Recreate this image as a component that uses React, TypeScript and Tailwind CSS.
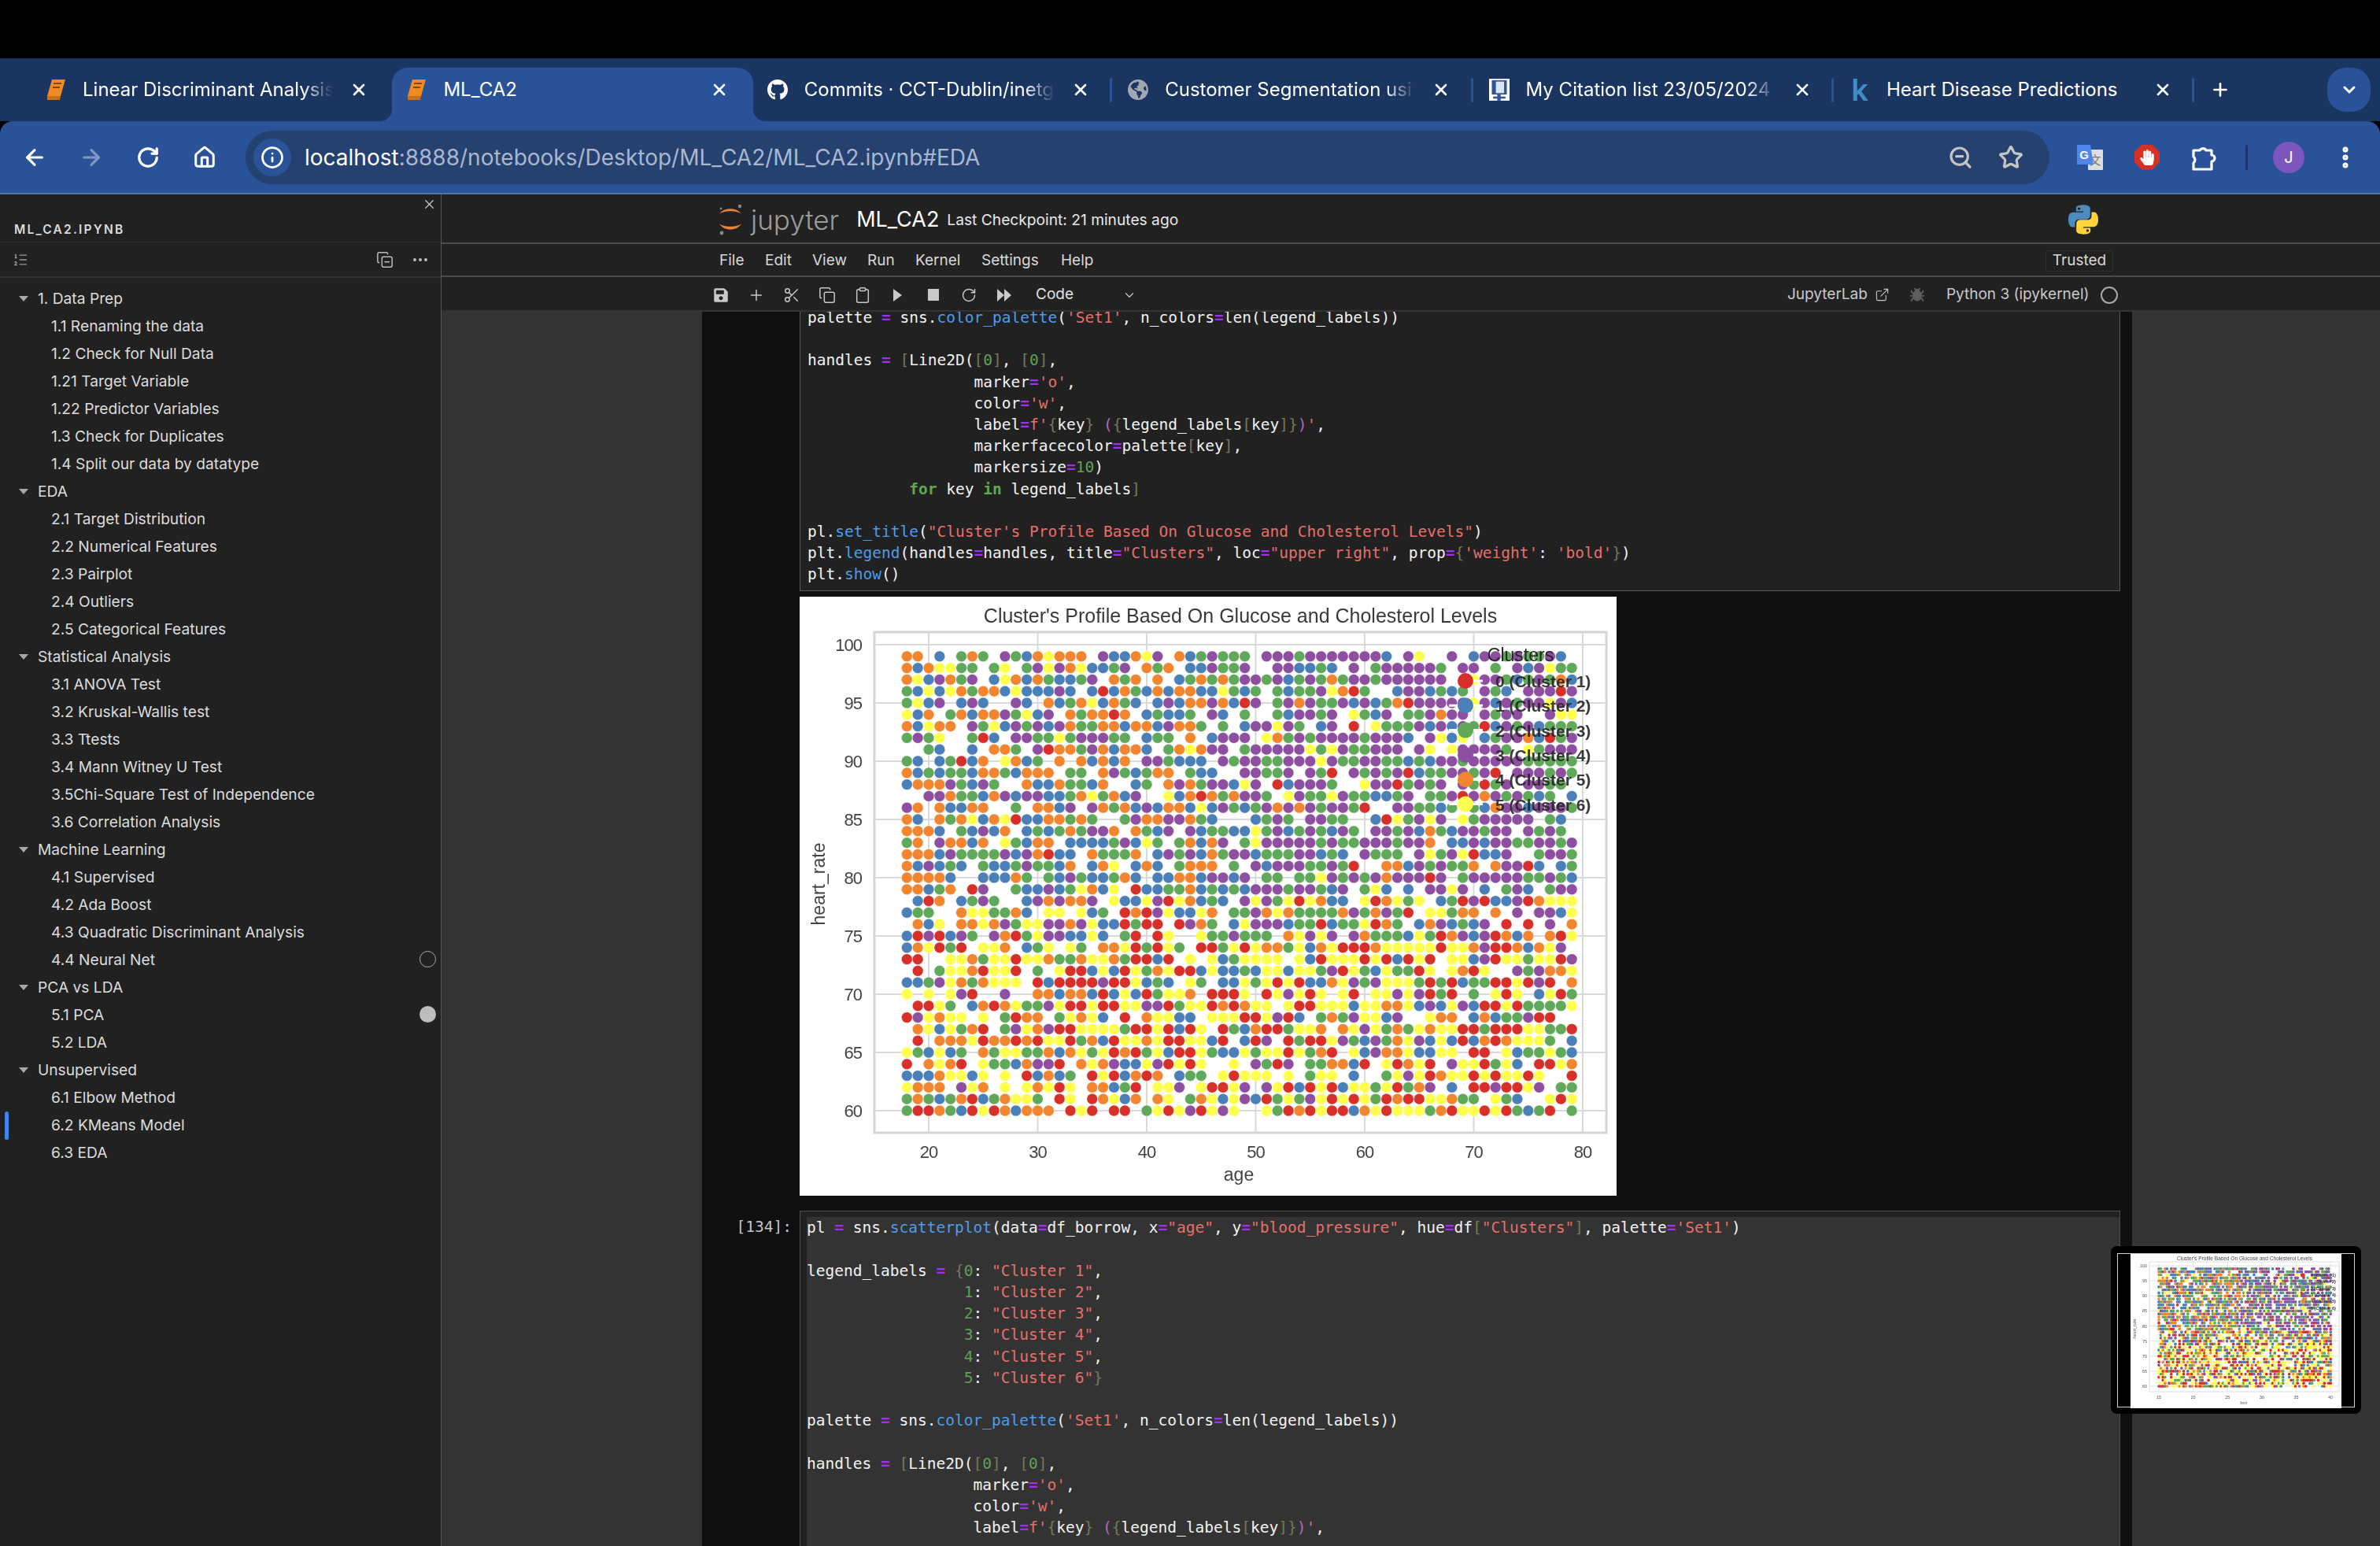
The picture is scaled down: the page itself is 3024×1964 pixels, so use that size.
import React from "react";
import {
  ArrowLeft, ArrowRight, RotateCw, House, Info, ZoomOut, Star, EllipsisVertical, X, Plus, ChevronDown,
  Scissors, Copy, Clipboard, ExternalLink, Bug, ListOrdered, Ellipsis, CopyMinus,
} from "lucide-react";
import { FaGithub, FaGlobeAmericas, FaSave, FaHandPaper } from "react-icons/fa";

const COLORS = ["#d7302a", "#4a7fb8", "#61a95a", "#8f4fa0", "#f28530", "#ffff4d"];

function rng(seed: number) {
  return () => {
    seed |= 0; seed = (seed + 0x6d2b79f5) | 0;
    let t = Math.imul(seed ^ (seed >>> 15), 1 | seed);
    t = (t + Math.imul(t ^ (t >>> 7), 61 | t)) ^ t;
    return ((t ^ (t >>> 14)) >>> 0) / 4294967296;
  };
}

function pick(hr: number, a: number, r: () => number) {
  // a runs from 0 (left of the axis) to 1 (right of the axis)
  const high = hr >= 79, mid = hr >= 75 && hr < 79;
  const w = high
    ? [0.03, a < 0.5 ? 0.3 : 0.13, 0.24, a > 0.45 ? 0.45 : 0.12, a < 0.5 ? 0.3 : 0.03, 0.06]
    : mid
    ? [0.14, 0.15, 0.2, 0.14, 0.17, 0.2]
    : [0.24, 0.1, 0.13, 0.06, a < 0.3 ? 0.18 : 0.09, 0.3];
  const total = w.reduce((s, v) => s + v, 0);
  let v = r() * total;
  for (let i = 0; i < 6; i++) { v -= w[i]; if (v <= 0) return i; }
  return 5;
}

function makeDots(cols: number, seed: number, gapChance: number) {
  const r = rng(seed);
  const out: { c: number; hr: number; k: number }[] = [];
  for (let hr = 99; hr >= 60; hr--) {
    for (let c = 0; c < cols; c++) {
      if (r() < gapChance) continue;
      out.push({ c, hr, k: pick(hr, c / cols, r) });
    }
  }
  return out;
}

const MAIN_DOTS = makeDots(62, 134, 0.13);
const MINI_DOTS = makeDots(84, 77, 0.28);

function MainChart() {
  const xs = [20, 30, 40, 50, 60, 70, 80];
  const ys = [100, 95, 90, 85, 80, 75, 70, 65, 60];
  const X = (a: number) => 1180 + (a - 20) * 13.85;
  const Y = (h: number) => 820 + (100 - h) * 14.8;
  const legend = ["0 (Cluster 1)", "1 (Cluster 2)", "2 (Cluster 3)", "3 (Cluster 4)", "4 (Cluster 5)", "5 (Cluster 6)"];
  const ff = "'Liberation Sans', sans-serif";
  return (
    <svg width={1038} height={761} viewBox="1016 759 1038 761" className="block bg-white blur-[0.4px]">
      <rect x={1111} y={804} width={930} height={636} fill="#fff" stroke="#d4d4d4" strokeWidth={3} />
      {xs.map((v) => <line key={v} x1={X(v)} x2={X(v)} y1={804} y2={1440} stroke="#d9d9d9" strokeWidth={2} />)}
      {ys.map((v) => <line key={v} x1={1111} x2={2041} y1={Y(v)} y2={Y(v)} stroke="#d9d9d9" strokeWidth={2} />)}
      {MAIN_DOTS.map((d, i) => (
        <circle key={i} cx={X(18 + d.c)} cy={Y(d.hr)} r={6.9} fill={COLORS[d.k]} stroke="#fff" strokeWidth={0.4} />
      ))}
      <text x={1576} y={792} textAnchor="middle" fontFamily={ff} fontSize={25} fill="#3a3a3a">Cluster's Profile Based On Glucose and Cholesterol Levels</text>
      {ys.map((v) => <text key={v} x={1095} y={Y(v) + 8} textAnchor="end" fontFamily={ff} fontSize={22} letterSpacing={-1} fill="#444">{v}</text>)}
      {xs.map((v) => <text key={v} x={X(v)} y={1472} textAnchor="middle" fontFamily={ff} fontSize={22} letterSpacing={-1} fill="#444">{v}</text>)}
      <text x={1574} y={1501} textAnchor="middle" fontFamily={ff} fontSize={23} fill="#444">age</text>
      <text transform="translate(1048 1124) rotate(-90)" textAnchor="middle" fontFamily={ff} fontSize={23} fill="#444">heart_rate</text>
      <text x={1932} y={841} textAnchor="middle" fontFamily={ff} fontSize={23} fill="#262626">Clusters</text>
      {legend.map((t, i) => {
        const y = 866 + i * 31.3;
        return (
          <g key={t}>
            <line x1={1841} x2={1884} y1={y} y2={y} stroke="#fff" strokeWidth={3} />
            <circle cx={1862} cy={y} r={10} fill={COLORS[i]} />
            <text x={1900} y={y + 8} fontFamily={ff} fontSize={21} fontWeight={700} fill="#262626" opacity={0.9}>{t}</text>
          </g>
        );
      })}
    </svg>
  );
}

function MiniChart() {
  const ff = "'Liberation Sans', sans-serif";
  const xt = [15, 20, 25, 30, 35, 40];
  const yt = [100, 95, 90, 85, 80, 75, 70, 65, 60];
  const X = (b: number) => 2743 + (b - 15) * 8.72;
  const Y = (h: number) => 1607 + (100 - h) * 3.825;
  return (
    <svg width={268} height={196} viewBox="2707 1592 268 196" className="block bg-white blur-[0.45px]">
      <rect x={2731} y={1602} width={241} height={165} fill="#fff" stroke="#ddd" strokeWidth={1} />
      {xt.map((v) => <line key={v} x1={X(v)} x2={X(v)} y1={1602} y2={1767} stroke="#e2e2e2" strokeWidth={1} />)}
      {yt.map((v) => <line key={v} x1={2731} x2={2972} y1={Y(v)} y2={Y(v)} stroke="#e2e2e2" strokeWidth={1} />)}
      {MINI_DOTS.map((d, i) => (
        <circle key={i} cx={2743 + d.c * 2.63} cy={Y(d.hr)} r={1.85} fill={COLORS[d.k]} />
      ))}
      <text x={2852} y={1600} textAnchor="middle" fontFamily={ff} fontSize={6.6} fill="#444">Cluster's Profile Based On Glucose and Cholesterol Levels</text>
      {yt.map((v) => <text key={v} x={2728} y={Y(v) + 2} textAnchor="end" fontFamily={ff} fontSize={5.5} fill="#555">{v}</text>)}
      {xt.map((v) => <text key={v} x={X(v)} y={1776} textAnchor="middle" fontFamily={ff} fontSize={5.5} fill="#555">{v}</text>)}
      <text x={2851} y={1783} textAnchor="middle" fontFamily={ff} fontSize={5.5} fill="#555">bmi</text>
      <text transform="translate(2714 1687) rotate(-90)" textAnchor="middle" fontFamily={ff} fontSize={5.5} fill="#555">heart_rate</text>
      {COLORS.map((c, i) => (
        <g key={c}>
          <circle cx={2926} cy={1619 + i * 8.3} r={2.8} fill={c} />
          <text x={2936} y={1621 + i * 8.3} fontFamily={ff} fontSize={5.5} fontWeight={700} fill="#333">{`${i} (Cluster ${i + 1})`}</text>
        </g>
      ))}
    </svg>
  );
}

function BookIcon() {
  return (
    <svg width={26} height={26} viewBox="0 0 26 26">
      <polygon points="8,0 25,0 19,21 2,21" fill="#f08a24" />
      <polygon points="2,21 19,21 18,26 2,26" fill="#c96f18" />
      <rect x={10} y={4} width={10} height={2} fill="#7a4a12" />
      <rect x={9} y={9} width={9} height={2} fill="#7a4a12" />
    </svg>
  );
}

function CitationIcon() {
  return (
    <svg width={30} height={32} viewBox="0 0 30 32">
      <rect width={30} height={32} fill="#fff" />
      <rect x={4} y={2} width={22} height={21} fill="#2f5597" />
      <rect x={10} y={4} width={12} height={17} fill="#dbe4f3" />
      <rect x={6} y={26} width={18} height={3} fill="#2f5597" />
      <rect x={12} y={23} width={5} height={9} fill="#2f5597" />
    </svg>
  );
}

function PuzzleIcon() {
  return (
    <svg width={34} height={36} viewBox="0 0 34 36" fill="none" stroke="#fff" strokeWidth={3.2} strokeLinejoin="round">
      <path d="M4 9 H12 A4.5 4.5 0 0 1 20 9 H27 V15 A4 4 0 0 1 27 23 V33 H4 V25 A5 5 0 0 0 4 17 Z" />
    </svg>
  );
}

function TabTitle({ text, fade }: { text: string; fade: boolean }) {
  return (
    <span
      className={
        fade
          ? "w-[318px] overflow-hidden whitespace-nowrap text-[24px] text-white [mask-image:linear-gradient(to_right,black_88%,transparent)]"
          : "w-[318px] overflow-hidden whitespace-nowrap text-[24px] text-white"
      }
    >
      {text}
    </span>
  );
}

const TABS: { title: string; icon: React.ReactNode; fade: boolean; sep: boolean }[] = [
  { title: "Linear Discriminant Analysis", icon: <BookIcon />, fade: true, sep: false },
  { title: "ML_CA2", icon: <BookIcon />, fade: false, sep: false },
  { title: "Commits · CCT-Dublin/inetg", icon: <FaGithub size={34} color="#fff" />, fade: true, sep: false },
  { title: "Customer Segmentation usi", icon: <FaGlobeAmericas size={28} color="#a2a8b2" />, fade: true, sep: true },
  { title: "My Citation list 23/05/2024", icon: <CitationIcon />, fade: true, sep: true },
  { title: "Heart Disease Predictions", icon: <span className="text-[38px] leading-none font-semibold text-[#3d8fc4]">k</span>, fade: false, sep: true },
];

function TabStrip() {
  return (
    <div className="flex h-[80px] bg-[#1a3560] pl-[40px]">
      {TABS.map((t, i) => (
        <div
          key={t.title}
          className={
            i === 1
              ? "relative mt-[12px] flex h-[68px] w-[458.4px] shrink-0 items-center rounded-t-[20px] bg-[#2a5298] pb-[12px] pl-[18px]"
              : "relative mt-[12px] flex h-[68px] w-[458.4px] shrink-0 items-center pb-[12px] pl-[18px]"
          }
        >
          {i === 1 && (
            <>
              <div className="absolute bottom-0 left-[-16px] h-[16px] w-[16px] bg-[radial-gradient(circle_at_0_0,transparent_16px,#2a5298_16.5px)]" />
              <div className="absolute right-[-16px] bottom-0 h-[16px] w-[16px] bg-[radial-gradient(circle_at_100%_0,transparent_16px,#2a5298_16.5px)]" />
            </>
          )}
          {t.sep && <div className="absolute top-[13px] left-[-5px] h-[31px] w-[3px] rounded-full bg-[#2a5298]" />}
          <div className="flex w-[26px] shrink-0 items-center justify-center">{t.icon}</div>
          <div className="ml-[21px] flex">
            <TabTitle text={t.title} fade={t.fade} />
          </div>
          <X className="ml-[21px] shrink-0 text-white" size={24} strokeWidth={2.6} />
        </div>
      ))}
      <div className="relative mt-[12px] flex h-[68px] items-center pb-[12px] pl-[18px]">
        <div className="absolute top-[13px] left-[-5px] h-[31px] w-[3px] rounded-full bg-[#2a5298]" />
        <Plus className="text-white" size={26} strokeWidth={2.4} />
      </div>
      <div className="mt-[12px] mr-[12px] ml-auto flex h-[56px] w-[55px] items-center justify-center rounded-[24px] bg-[#2a5298]">
        <ChevronDown className="text-white" size={24} strokeWidth={3} />
      </div>
    </div>
  );
}

function TBtn({ children, w = "w-[72px]" }: { children: React.ReactNode; w?: string }) {
  return <div className={`flex ${w} shrink-0 items-center justify-center`}>{children}</div>;
}

function TranslateIcon() {
  return (
    <svg width={34} height={32} viewBox="0 0 34 32">
      <rect x={14} y={6} width={19} height={26} rx={1} fill="#dedede" />
      <text x={23} y={25} textAnchor="middle" fontSize={15} fontFamily="'Noto Sans CJK SC', sans-serif" fill="#777">文</text>
      <polygon points="0,0 17,0 21,25 4,25 0,25" fill="#4f86ec" />
      <text x={9} y={18} textAnchor="middle" fontSize={15} fontWeight={700} fontFamily="'Liberation Sans', sans-serif" fill="#fff">G</text>
    </svg>
  );
}

function AddressBar() {
  return (
    <div className="flex h-[93px] items-center rounded-t-[16px] border-b-2 border-[#4f74aa] bg-[#2a5298] pl-[8px]">
      <TBtn><ArrowLeft className="text-white" size={32} strokeWidth={2.4} /></TBtn>
      <TBtn><ArrowRight className="text-[#7f97c2]" size={32} strokeWidth={2.4} /></TBtn>
      <TBtn><RotateCw className="text-white" size={30} strokeWidth={2.6} /></TBtn>
      <TBtn><House className="text-white" size={30} strokeWidth={2.4} /></TBtn>
      <div className="ml-[16px] flex h-[68px] w-[2292px] shrink-0 items-center rounded-full bg-[#24416f] pl-[10px]">
        <div className="flex h-[48px] w-[48px] items-center justify-center rounded-full bg-[#2a5298]">
          <Info className="text-white" size={30} strokeWidth={2.2} />
        </div>
        <div className="ml-[17px] text-[28px] whitespace-nowrap text-[#a9b7cf]">
          <span className="text-white">localhost</span>:8888/notebooks/Desktop/ML_CA2/ML_CA2.ipynb#EDA
        </div>
        <div className="mr-[17px] ml-auto flex">
          <TBtn w="w-[64px]"><ZoomOut className="text-[#c4c4c4]" size={32} strokeWidth={2.4} /></TBtn>
          <TBtn w="w-[64px]"><Star className="text-[#c4c4c4]" size={32} strokeWidth={2.4} /></TBtn>
        </div>
      </div>
      <div className="ml-[16px] flex">
        <TBtn><TranslateIcon /></TBtn>
        <TBtn>
          <div className="relative flex h-[32px] w-[32px] items-center justify-center bg-[#d93025] [clip-path:polygon(30%_0,70%_0,100%_30%,100%_70%,70%_100%,30%_100%,0_70%,0_30%)]">
            <FaHandPaper size={20} color="#fff" />
          </div>
        </TBtn>
        <TBtn><PuzzleIcon /></TBtn>
        <div className="flex w-[36px] shrink-0 items-center justify-center">
          <div className="h-[32px] w-[3px] rounded-full bg-[#1a3560]" />
        </div>
        <TBtn>
          <div className="flex h-[40px] w-[40px] items-center justify-center rounded-full bg-[#7a56bd] text-[20px] text-white">J</div>
        </TBtn>
        <TBtn><EllipsisVertical className="text-white" size={34} strokeWidth={3} /></TBtn>
      </div>
    </div>
  );
}

const TOC: [number, string][] = [
  [1, "1. Data Prep"], [2, "1.1 Renaming the data"], [2, "1.2 Check for Null Data"], [2, "1.21 Target Variable"],
  [2, "1.22 Predictor Variables"], [2, "1.3 Check for Duplicates"], [2, "1.4 Split our data by datatype"],
  [1, "EDA"], [2, "2.1 Target Distribution"], [2, "2.2 Numerical Features"], [2, "2.3 Pairplot"], [2, "2.4 Outliers"], [2, "2.5 Categorical Features"],
  [1, "Statistical Analysis"], [2, "3.1 ANOVA Test"], [2, "3.2 Kruskal-Wallis test"], [2, "3.3 Ttests"], [2, "3.4 Mann Witney U Test"], [2, "3.5Chi-Square Test of Independence"], [2, "3.6 Correlation Analysis"],
  [1, "Machine Learning"], [2, "4.1 Supervised"], [2, "4.2 Ada Boost"], [2, "4.3 Quadratic Discriminant Analysis"], [2, "4.4 Neural Net"],
  [1, "PCA vs LDA"], [2, "5.1 PCA"], [2, "5.2 LDA"],
  [1, "Unsupervised"], [2, "6.1 Elbow Method"], [2, "6.2 KMeans Model"], [2, "6.3 EDA"],
];

function Sidebar() {
  return (
    <div className="flex w-[561px] shrink-0 flex-col border-r border-[#555] bg-[#212121]">
      <div className="flex h-[61px] flex-col justify-between border-b border-[#2b2b2b] pb-[5px]">
        <div className="flex justify-end pt-[3px] pr-[5px]">
          <X className="text-[#c9c9c9]" size={19} strokeWidth={1.6} />
        </div>
        <div className="pl-[18px] text-[15.5px] leading-[20px] font-semibold tracking-[2.2px] text-[#dcdcdc]">ML_CA2.IPYNB</div>
      </div>
      <div className="flex h-[45px] items-center border-b-2 border-[#333] pr-[14px] pl-[16px]">
        <ListOrdered className="text-[#9a9a9a]" size={20} strokeWidth={1.6} />
        <CopyMinus className="ml-auto text-[#bdbdbd]" size={22} strokeWidth={1.6} />
        <Ellipsis className="ml-[22px] text-[#bdbdbd]" size={24} strokeWidth={2} />
      </div>
      <div className="pt-[9px]">
        {TOC.map(([lvl, label]) => (
          <div key={label} className="relative flex h-[35px] items-center text-[19.2px] text-[#dcdcdc]">
            {lvl === 1 ? (
              <div className="flex items-center pl-[24px]">
                <div className="h-0 w-0 border-x-[6px] border-t-[7px] border-x-transparent border-t-[#a8a8a8]" />
                <span className="ml-[12px]">{label}</span>
              </div>
            ) : (
              <span className="pl-[65px]">{label}</span>
            )}
            {label === "4.4 Neural Net" && <div className="absolute top-[6px] right-[6px] h-[21px] w-[21px] rounded-full border border-[#aaa]" />}
            {label === "5.1 PCA" && <div className="absolute top-[6px] right-[6px] h-[21px] w-[21px] rounded-full bg-[#bdbdbd]" />}
            {label === "6.2 KMeans Model" && <div className="absolute top-0 left-[6px] h-[36px] w-[5px] rounded-full bg-[#3f86ea]" />}
          </div>
        ))}
      </div>
    </div>
  );
}

function JupyterLogo() {
  return (
    <svg width={34} height={42} viewBox="0 0 34 42">
      <path d="M3 14 C8 5 26 5 31 14 C26 9 8 9 3 14 Z" fill="#e8833a" />
      <path d="M3 26 C8 36 26 36 31 26 C26 31 8 31 3 26 Z" fill="#e8833a" />
      <circle cx={29} cy={4} r={2.2} fill="#888" />
      <circle cx={5} cy={7} r={1.4} fill="#888" />
      <circle cx={6} cy={38} r={2.4} fill="#888" />
    </svg>
  );
}

function PythonLogo() {
  return (
    <svg width={38} height={38} viewBox="0 0 112 112">
      <path fill="#4b8bbe" d="M55 1C27 1 29 13 29 13v12h27v4H18S0 27 0 56s16 28 16 28h9V71s-1-16 15-16h27s15 0 15-15V16S85 1 55 1zM40 10a5 5 0 1 1 0 10 5 5 0 0 1 0-10z" />
      <path fill="#ffd43b" d="M57 111c28 0 26-12 26-12V87H56v-4h38s18 2 18-27-16-28-16-28h-9v13s1 16-15 16H45s-15 0-15 15v24s-3 15 27 15zm15-9a5 5 0 1 1 0-10 5 5 0 0 1 0 10z" />
    </svg>
  );
}

function NotebookHeader() {
  return (
    <div className="bg-[#212121] text-[#d8d8d8]">
      <div className="flex h-[63px] items-center border-b-2 border-[#4a4a4a] pt-[3px] pl-[350px]">
        <JupyterLogo />
        <span className="ml-[9px] text-[35px] leading-none font-light text-[#9c9c9c]">jupyter</span>
        <span className="ml-[22px] text-[27px] text-white">ML_CA2</span>
        <span className="ml-[10px] text-[19.2px] text-[#e8e8e8]">Last Checkpoint: 21 minutes ago</span>
        <div className="mr-[358px] ml-auto"><PythonLogo /></div>
      </div>
      <div className="flex h-[42px] items-center border-b-2 border-[#4a4a4a] pt-[2px] pl-[353px] text-[19px]">
        <span className="w-[58px]">File</span>
        <span className="w-[60px]">Edit</span>
        <span className="w-[70px]">View</span>
        <span className="w-[61px]">Run</span>
        <span className="w-[84px]">Kernel</span>
        <span className="w-[101px]">Settings</span>
        <span>Help</span>
        <div className="mr-[339px] ml-auto flex h-[27px] w-[86px] items-center justify-center rounded-[2px] border border-[#2e2e2e]">Trusted</div>
      </div>
      <div className="flex h-[44px] items-center border-b-2 border-[#333] pt-[3px] pl-[332px] text-[#c9c9c9]">
        <div className="flex w-[45px] justify-center"><FaSave size={20} /></div>
        <div className="flex w-[45px] justify-center"><Plus size={22} strokeWidth={1.6} /></div>
        <div className="flex w-[45px] justify-center"><Scissors size={22} strokeWidth={1.6} /></div>
        <div className="flex w-[45px] justify-center"><Copy size={22} strokeWidth={1.6} /></div>
        <div className="flex w-[45px] justify-center"><Clipboard size={22} strokeWidth={1.6} /></div>
        <div className="flex w-[45px] justify-center">
          <div className="h-0 w-0 border-y-[8px] border-l-[11px] border-y-transparent border-l-[#c9c9c9]" />
        </div>
        <div className="flex w-[45px] justify-center"><div className="h-[15px] w-[14px] bg-[#c9c9c9]" /></div>
        <div className="flex w-[45px] justify-center"><RotateCw size={20} strokeWidth={1.8} /></div>
        <div className="flex w-[45px] justify-center">
          <div className="h-0 w-0 border-y-[8px] border-l-[9px] border-y-transparent border-l-[#c9c9c9]" />
          <div className="h-0 w-0 border-y-[8px] border-l-[9px] border-y-transparent border-l-[#c9c9c9]" />
        </div>
        <span className="ml-[18px] w-[110px] text-[19px] text-[#e2e2e2]">Code</span>
        <ChevronDown size={18} strokeWidth={1.6} />
        <span className="ml-[827px] text-[19px]">JupyterLab</span>
        <ExternalLink className="ml-[9px]" size={19} strokeWidth={1.4} />
        <Bug className="ml-[25px] text-[#5e5e5e]" size={20} fill="#5e5e5e" />
        <span className="ml-[27px] text-[19px]">Python 3 (ipykernel)</span>
        <div className="ml-[15px] h-[22px] w-[22px] rounded-full border-2 border-[#aaa]" />
      </div>
    </div>
  );
}

type Seg = [string, string];
const CLS: Record<string, string> = {
  s: "text-[#e5706a]", o: "text-[#a02ff0] font-bold", n: "text-[#5fa056]", b: "text-[#77775a]", f: "text-[#4f9ce8]", k: "text-[#5fa94f] font-bold", p: "text-[#b06ac0]", t: "",
};

function tokenize(line: string): Seg[] {
  const re = /("[^"]*"|'[^']*'|\b(?:for|in)\b|\b\d+\b|=|[\[\]{}]|(?<=\.)\w+)/g;
  const out: Seg[] = [];
  let last = 0;
  let m: RegExpExecArray | null;
  while ((m = re.exec(line))) {
    if (m.index > last) out.push([line.slice(last, m.index), "t"]);
    const v = m[0];
    const kind = /^["']/.test(v) ? "s" : v === "for" || v === "in" ? "k" : /^\d+$/.test(v) ? "n" : v === "=" ? "o" : /^[\[\]{}]$/.test(v) ? "b" : "f";
    out.push([v, kind]);
    last = m.index + v.length;
  }
  if (last < line.length) out.push([line.slice(last), "t"]);
  return out;
}

const FSTRING: Seg[] = [
  ["                  label", "t"], ["=", "o"], ["f'", "s"], ["{", "b"], ["key", "t"], ["}", "b"], [" (", "p"], ["{", "b"],
  ["legend_labels", "t"], ["[", "b"], ["key", "t"], ["]", "b"], ["}", "b"], [")", "p"], ["'", "s"], [",", "t"],
];

function Code({ lines }: { lines: string[] }) {
  return (
    <pre className="text-[19.52px] leading-[27.2px] text-[#f2f2f2] [font-family:'DejaVu_Sans_Mono',monospace]">
      {lines.map((l, i) => (
        <div key={i} className="h-[27.2px] whitespace-pre">
          {(l === "@label" ? FSTRING : tokenize(l)).map((s, j) => (
            <span key={j} className={CLS[s[1]]}>{s[0]}</span>
          ))}
        </div>
      ))}
    </pre>
  );
}

const CELL1 = [
  "palette = sns.color_palette('Set1', n_colors=len(legend_labels))",
  "",
  "handles = [Line2D([0], [0],",
  "                  marker='o',",
  "                  color='w',",
  "@label",
  "                  markerfacecolor=palette[key],",
  "                  markersize=10)",
  "           for key in legend_labels]",
  "",
  "pl.set_title(\"Cluster's Profile Based On Glucose and Cholesterol Levels\")",
  "plt.legend(handles=handles, title=\"Clusters\", loc=\"upper right\", prop={'weight': 'bold'})",
  "plt.show()",
];

const CELL2 = [
  "pl = sns.scatterplot(data=df_borrow, x=\"age\", y=\"blood_pressure\", hue=df[\"Clusters\"], palette='Set1')",
  "",
  "legend_labels = {0: \"Cluster 1\",",
  "                 1: \"Cluster 2\",",
  "                 2: \"Cluster 3\",",
  "                 3: \"Cluster 4\",",
  "                 4: \"Cluster 5\",",
  "                 5: \"Cluster 6\"}",
  "",
  "palette = sns.color_palette('Set1', n_colors=len(legend_labels))",
  "",
  "handles = [Line2D([0], [0],",
  "                  marker='o',",
  "                  color='w',",
  "@label",
];

function Notebook() {
  return (
    <div className="flex min-w-0 flex-1 flex-col bg-[#333]">
      <NotebookHeader />
      <div className="ml-[331px] min-h-0 w-[1817px] flex-1 overflow-hidden bg-[#0f0f0f]">
        <div className="-mt-[6px] flex">
          <div className="w-[124px] shrink-0" />
          <div className="w-[1678px] border-x border-b border-[#5a5a5a] bg-[#212121] pb-[7px] pl-[9px]">
            <Code lines={CELL1} />
          </div>
        </div>
        <div className="mt-[7px] flex">
          <div className="w-[124px] shrink-0" />
          <MainChart />
        </div>
        <div className="mt-[19px] flex">
          <div className="w-[124px] shrink-0 pt-[7px] pr-[10px] text-right text-[19.52px] leading-[27.2px] text-[#c4c4c4] [font-family:'DejaVu_Sans_Mono',monospace]">[134]:</div>
          <div className="h-[500px] w-[1678px] border-x border-t border-[#4e4e4e] bg-[#212121] pt-[7px] pl-[8px]">
            <div className="h-full bg-[#333]">
              <Code lines={CELL2} />
            </div>
          </div>
        </div>
      </div>
    </div>
  );
}

export default function App() {
  return (
    <div className="relative flex h-[1964px] w-[3024px] flex-col overflow-hidden bg-black [font-family:Inter,sans-serif]">
      <div className="h-[74px] shrink-0 bg-black" />
      <TabStrip />
      <AddressBar />
      <div className="flex min-h-0 flex-1">
        <Sidebar />
        <Notebook />
      </div>
      <div className="absolute top-[1583px] left-[2682px] h-[213px] w-[318px] rounded-[8px] bg-black">
        <div className="mt-[9px] ml-[8px] flex h-[196px] w-[302px] justify-center border border-[#d0d0d0] bg-black">
          <MiniChart />
        </div>
      </div>
    </div>
  );
}
